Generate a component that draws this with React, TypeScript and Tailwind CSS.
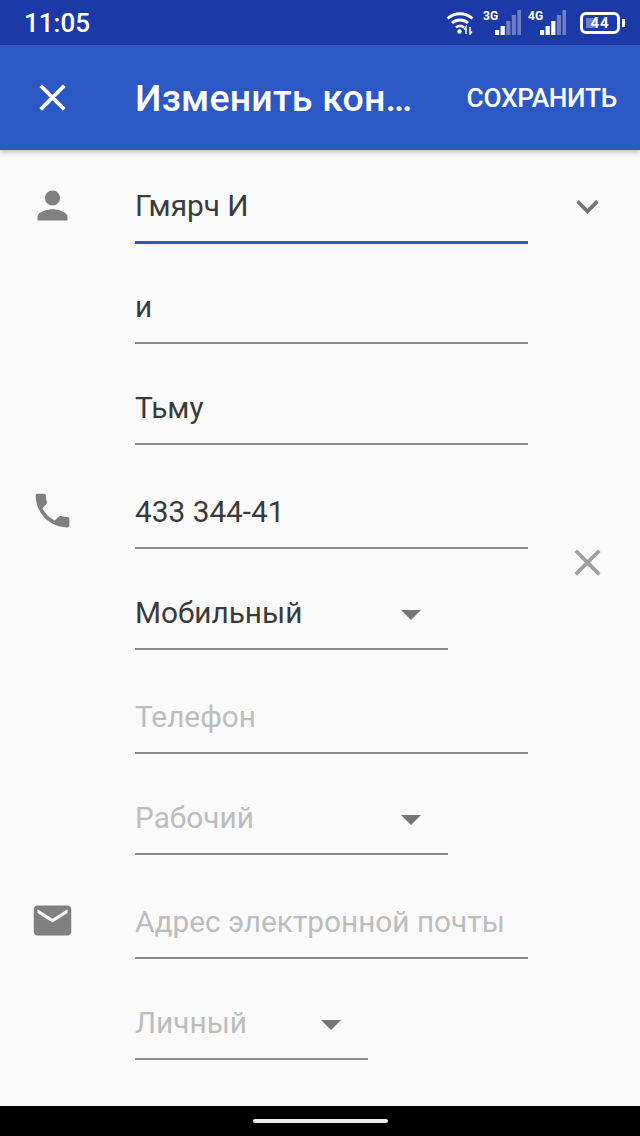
const CLOSE =
  "M19 6.41L17.59 5 12 10.59 6.41 5 5 6.41 10.59 12 5 17.59 6.41 19 12 13.41 17.59 19 19 17.59 13.41 12 19 6.41z";
const PERSON =
  "M12 12c2.21 0 4-1.79 4-4s-1.79-4-4-4-4 1.79-4 4 1.79 4 4 4zm0 2c-2.67 0-8 1.34-8 4v2h16v-2c0-2.66-5.33-4-8-4z";
const PHONE =
  "M6.62 10.79c1.44 2.83 3.76 5.14 6.59 6.59l2.2-2.2c.27-.27.67-.36 1.02-.24 1.12.37 2.33.57 3.57.57.55 0 1 .45 1 1V20c0 .55-.45 1-1 1-9.39 0-17-7.61-17-17 0-.55.45-1 1-1h3.5c.55 0 1 .45 1 1 0 1.25.2 2.45.57 3.57.11.35.03.74-.25 1.02l-2.2 2.2z";
const MAIL =
  "M20 4H4c-1.1 0-1.99.9-1.99 2L2 18c0 1.1.9 2 2 2h16c1.1 0 2-.9 2-2V6c0-1.1-.9-2-2-2zm0 4l-8 5-8-5V6l8 5 8-5v2z";
const CHEVRON = "M16.59 8.59L12 13.17 7.41 8.59 6 10l6 6 6-6z";

const Icon = ({ d, className }: { d: string; className: string }) => (
  <svg viewBox="0 0 24 24" className={className} fill="currentColor">
    <path d={d} />
  </svg>
);

// status bar signal: five bars, `lit` of them at full white
const Signal = ({ label, lit }: { label: string; lit: number }) => (
  <div className="relative w-[38px] h-[26px]">
    <span className="absolute left-0 top-0 text-[12px] leading-[12px] font-bold text-white">
      {label}
    </span>
    <svg viewBox="0 0 38 26" className="absolute inset-0 w-[38px] h-[26px]">
      {[5, 9, 14, 20, 25].map((bar, i) => (
        <rect
          key={i}
          x={12 + i * 5.6}
          y={25 - bar}
          width="4.200"
          height={bar}
          fill="#fff"
          opacity={i < lit ? 1 : 0.35}
        />
      ))}
    </svg>
  </div>
);

type FieldProps = {
  text: string;
  h: string;
  placeholder?: boolean;
  active?: boolean;
  width?: string;
  dropdown?: boolean;
  icon?: React.ReactNode;
  action?: React.ReactNode;
};

const Field = ({ text, h, placeholder, active, width = "w-[393px]", dropdown, icon, action }: FieldProps) => (
  <div className={`flex ${h}`}>
    <div className="w-[135px] shrink-0 flex items-end justify-center pr-[30px] pb-[16px]">{icon}</div>
    <div
      className={`${width} flex items-end justify-between pb-[15px] ${
        active ? "border-b-[3px] border-[#2c58c6]" : "border-b-2 border-[#8a8a8a]"
      }`}
    >
      <span
        className={`text-[29.800px] leading-[40px] ${placeholder ? "text-[#bdbdbd]" : "text-[#3a3a3a]"}`}
      >
        {text}
      </span>
      {dropdown && (
        <svg viewBox="0 0 20 10" className="w-[20px] h-[10px] mb-[13px] mr-[27px] text-[#757575]" fill="currentColor">
          <polygon points="0,0 20,0 10,10" />
        </svg>
      )}
    </div>
    {action}
  </div>
);

export default function App() {
  return (
    <div className="w-[640px] h-[1136px] flex flex-col bg-[#fafafa] overflow-hidden font-['Roboto',sans-serif]">
      {/* Status bar */}
      <div className="h-[45px] shrink-0 bg-[#1c39a8] flex items-center justify-between pl-[24px] pr-[15px]">
        <span className="text-white text-[26px] font-medium leading-none">11:05</span>
        <div className="flex items-center">
          <svg viewBox="0 0 28 24" className="w-[28px] h-[24px] mr-[9px]" fill="none" stroke="#fff">
            <path d="M1.500 7.500C8.500 1 19.500 1 26.500 7.500" strokeWidth="3" />
            <path d="M6 12c4.500-4 11.500-4 16 0" strokeWidth="3" />
            <path d="M10 16.500c2.500-2 5.500-2 8 0" strokeWidth="2.600" />
            <circle cx="13.500" cy="20.500" r="2.200" fill="#fff" stroke="none" />
            <path d="M20 23v-7l-2 2.500M24 16v7l2-2.500" strokeWidth="1.500" />
          </svg>
          <Signal label="3G" lit={2} />
          <div className="w-[7px]" />
          <Signal label="4G" lit={3} />
          <div className="w-[14px]" />
          <div className="w-[40px] h-[22px] rounded-[6px] border-[3px] border-white flex items-center justify-center relative overflow-hidden">
            <div className="absolute left-[3px] top-[3px] bottom-[3px] w-[9px] bg-white/35" />
            <span className="relative mt-[1px] text-white text-[15px] leading-none font-bold tracking-[1px]">44</span>
          </div>
          <div className="w-[3px] h-[8px] bg-white ml-[2px]" />
        </div>
      </div>

      {/* App bar */}
      <div className="relative z-10 h-[105px] shrink-0 bg-[#2c58c6] flex items-center shadow-[0_2px_5px_rgba(0,0,0,0.25)]">
        <div className="w-[135px] flex justify-center pr-[30px]">
          <Icon d={CLOSE} className="w-[45px] h-[45px] text-white" />
        </div>
        <span className="mt-[3px] text-white text-[37.500px] font-medium leading-none tracking-[0.2px]">Изменить кон…</span>
        <span className="ml-auto mr-[23px] mt-[2px] text-white text-[26.250px] font-medium leading-none tracking-[-0.3px]">
          СОХРАНИТЬ
        </span>
      </div>

      {/* Form */}
      <div className="flex-1 flex flex-col">
        <Field
          text="Гмярч И"
          h="h-[94px]"
          active
          icon={<Icon d={PERSON} className="w-[45px] h-[45px] text-[#808080]" />}
          action={
            <div className="flex-1 flex justify-center pl-[6px] pt-[34px]">
              <Icon d={CHEVRON} className="w-[45px] h-[45px] text-[#757575]" />
            </div>
          }
        />
        <Field text="и" h="h-[100px]" />
        <Field text="Тьму" h="h-[101px]" />
        <Field
          text="433 344-41"
          h="h-[104px]"
          icon={<Icon d={PHONE} className="w-[45px] h-[45px] text-[#808080]" />}
        />
        <Field
          text="Мобильный"
          h="h-[101px]"
          width="w-[313px]"
          dropdown
          action={
            <div className="flex-1 pl-[117px]">
              <Icon d={CLOSE} className="w-[45px] h-[45px] text-[#a0a0a0] mt-[-9px]" />
            </div>
          }
        />
        <Field text="Телефон" h="h-[104px]" placeholder />
        <Field text="Рабочий" h="h-[101px]" width="w-[313px]" dropdown placeholder />
        <Field
          text="Адрес электронной почты"
          h="h-[104px]"
          placeholder
          icon={<Icon d={MAIL} className="w-[45px] h-[45px] text-[#808080]" />}
        />
        <Field text="Личный" h="h-[101px]" width="w-[233px]" dropdown placeholder />
      </div>

      {/* Nav bar */}
      <div className="h-[30px] shrink-0 bg-black flex items-center justify-center">
        <div className="w-[135px] h-[4px] rounded-full bg-[#ececec]" />
      </div>
    </div>
  );
}
